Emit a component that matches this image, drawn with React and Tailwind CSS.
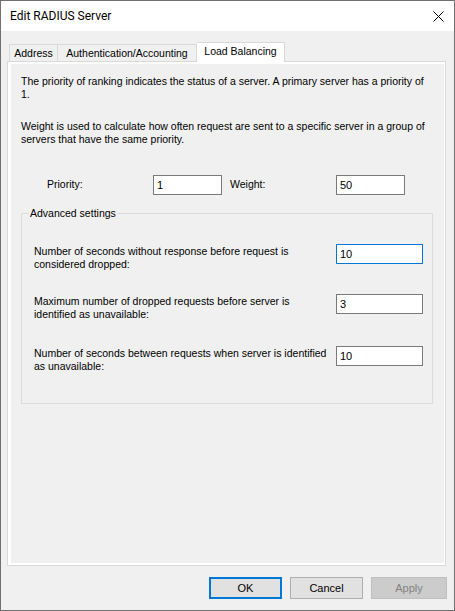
const ui = { fontFamily: '"Liberation Sans", Arial, sans-serif' };

function Field({ value, focused, className = '' }) {
  return (
    <div
      className={`h-[20px] bg-white border flex items-center pl-[3px] text-[11px] text-black ${
        focused ? 'border-[#0078d7]' : 'border-[#7a7a7a]'
      } ${className}`}
    >
      {value}
    </div>
  );
}

function Row({ children, value, focused, className = '' }) {
  return (
    <div className={`flex items-start justify-between ${className}`}>
      <p className="pt-[1px] leading-[13px] whitespace-nowrap">{children}</p>
      <Field value={value} focused={focused} className="w-[87px] shrink-0" />
    </div>
  );
}

function Button({ children, variant }) {
  const styles = {
    default: 'border-2 border-[#0078d7] bg-[#e1e1e1] text-black',
    normal: 'border border-[#adadad] bg-[#e1e1e1] text-black',
    disabled: 'border border-[#bfbfbf] bg-[#cccccc] text-[#838383]',
  };
  return (
    <button
      className={`h-[22px] flex items-center justify-center text-[11px] ${styles[variant]}`}
    >
      {children}
    </button>
  );
}

export default function App() {
  return (
    <div
      className="w-[455px] h-[611px] border border-[#707070] bg-[#f0f0f0] flex flex-col text-black overflow-hidden"
      style={ui}
    >
      {/* title bar */}
      <div className="h-[30px] bg-white flex items-center justify-between pl-[9px] pr-[10px]">
        <span className="text-[12px]" style={{ fontFamily: 'Roboto, sans-serif' }}>
          Edit RADIUS Server
        </span>
        <svg width="11" height="11" viewBox="0 0 11 11" className="mt-[1px]">
          <path d="M0.5 0.5L10.5 10.5M10.5 0.5L0.5 10.5" stroke="#000" strokeWidth="1" />
        </svg>
      </div>

      <div className="flex flex-col px-[6px] pt-[11px]">
        {/* tabs */}
        <div className="flex items-end h-[19px] pl-[2px] text-[10.5px]">
          <div className="h-[17px] w-[49px] border border-b-0 border-[#d9d9d9] flex items-center justify-center pt-[1px]">
            Address
          </div>
          <div className="h-[17px] w-[139px] border border-b-0 border-l-0 border-[#d9d9d9] flex items-center justify-center pt-[1px]">
            Authentication/Accounting
          </div>
          <div className="relative z-10 -mb-px h-[20px] w-[88px] border border-b-0 border-l-0 border-[#d9d9d9] bg-white flex items-center justify-center pb-[1px]">
            Load Balancing
          </div>
        </div>

        {/* tab page */}
        <div className="h-[505px] w-[439px] border border-[#d9d9d9] bg-white pt-[2px] pb-[2px] pl-[3px] pr-[1px]">
          <div className="h-full bg-[#f0f0f0] pl-[10px] pt-[11px] text-[10.5px]">
            <p className="leading-[13px] whitespace-nowrap">
              The priority of ranking indicates the status of a server. A primary server has a priority of
              <br />
              1.
            </p>
            <p className="mt-[19px] leading-[13px] whitespace-nowrap">
              Weight is used to calculate how often request are sent to a specific server in a group of
              <br />
              servers that have the same priority.
            </p>

            <div className="mt-[29px] flex items-center pl-[26px]">
              <span className="w-[106px]">Priority:</span>
              <Field value="1" className="w-[69px]" />
              <span className="ml-[8px] w-[106px]">Weight:</span>
              <Field value="50" className="w-[69px]" />
            </div>

            <fieldset className="mt-[12px] w-[412px] min-w-0 border border-[#dcdcdc]">
              <legend className="ml-[7px] px-[1px] leading-[13px]">Advanced settings</legend>
              <div className="pl-[12px] pr-[9px] pb-[30px]">
                <Row value="10" focused className="mt-[24px]">
                  Number of seconds without response before request is
                  <br />
                  considered dropped:
                </Row>
                <Row value="3" className="mt-[23px]">
                  Maximum number of dropped requests before server is
                  <br />
                  identified as unavailable:
                </Row>
                <Row value="10" className="mt-[25px]">
                  Number of seconds between requests when server is identified
                  <br />
                  as unavailable:
                </Row>
              </div>
            </fieldset>
          </div>
        </div>
      </div>

      {/* dialog buttons */}
      <div className="mt-[11px] flex justify-end gap-[8px] pr-[7px]">
        <div className="w-[73px] flex flex-col"><Button variant="default">OK</Button></div>
        <div className="w-[73px] flex flex-col"><Button variant="normal">Cancel</Button></div>
        <div className="w-[76px] flex flex-col"><Button variant="disabled">Apply</Button></div>
      </div>
    </div>
  );
}
